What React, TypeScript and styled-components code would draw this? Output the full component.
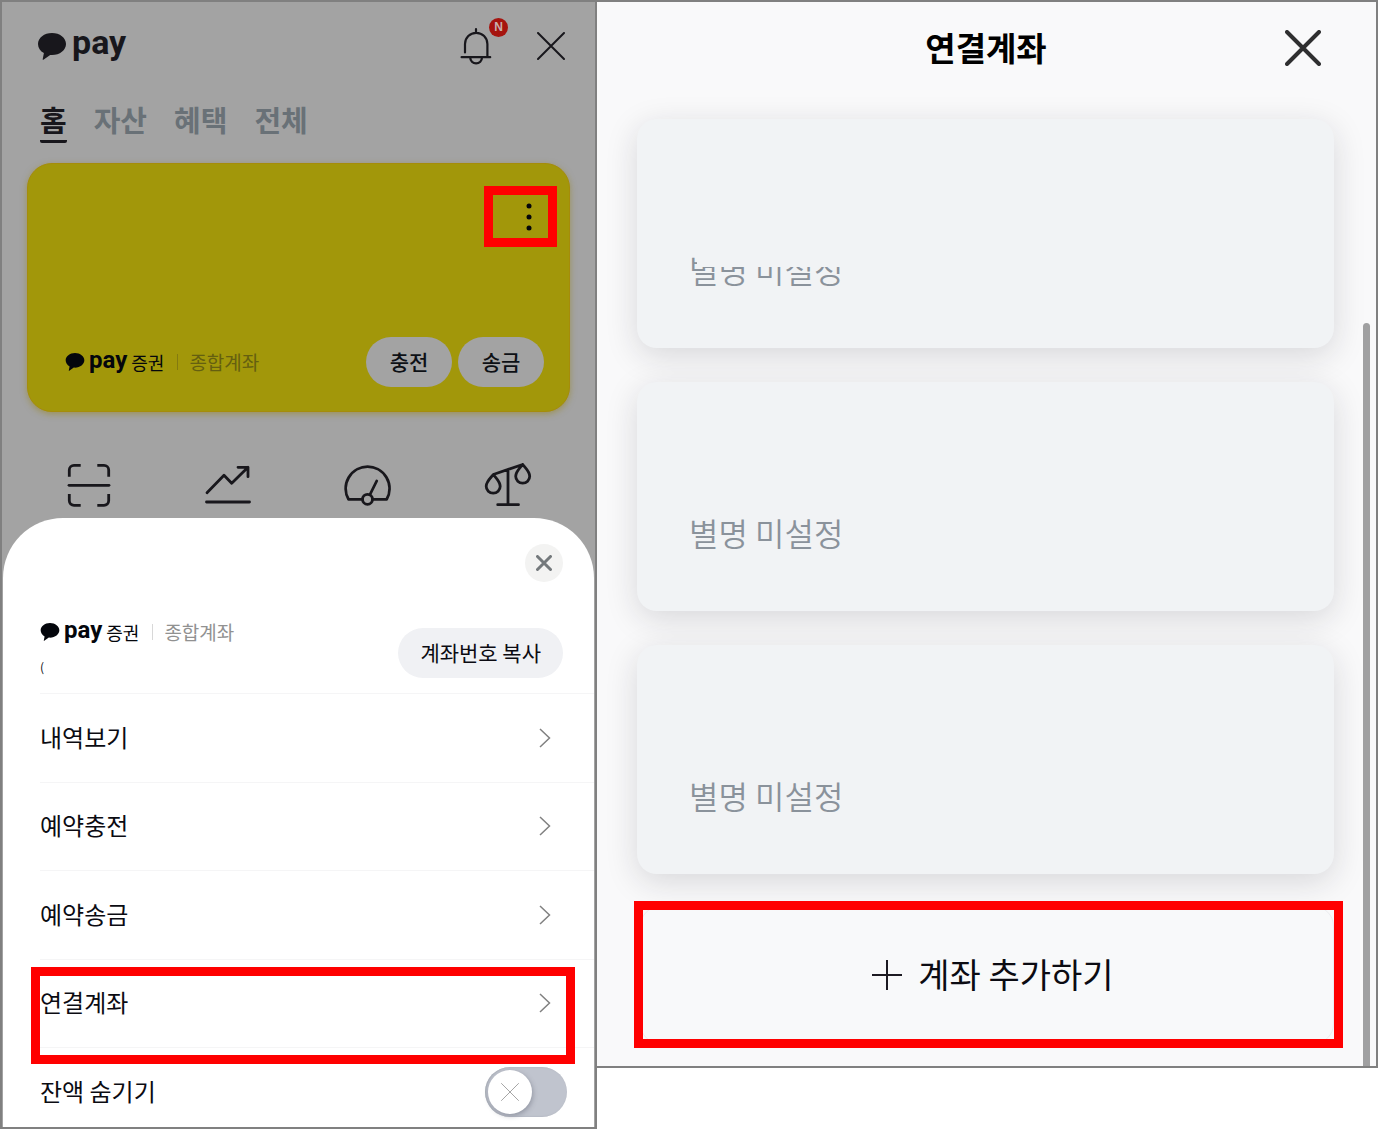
import React from 'react';
import styled, { createGlobalStyle, css } from 'styled-components';

const color = {
  frame: '#808080',
  dim: '#a3a3a3',
  dimInk: '#18171c',
  ink: '#0b0b12',
  red: '#ff0000',
  yellow: '#a2970a',
};

const GlobalStyle = createGlobalStyle`
  *, *::before, *::after { box-sizing: border-box; }
  body {
    margin: 0;
    background: #ffffff;
    font-family: "Noto Sans CJK KR", "Noto Sans", sans-serif;
    color: ${color.ink};
  }
  h1, p, ul { margin: 0; padding: 0; font-weight: inherit; }
  ul { list-style: none; }
  button {
    border: 0;
    padding: 0;
    background: none;
    font: inherit;
    color: inherit;
    cursor: pointer;
  }
  a { color: inherit; text-decoration: none; }
  svg { display: block; flex: none; }
`;

const Page = styled.main`
  display: grid;
  grid-template-columns: 597fr 781fr;
  align-items: start;
`;

/* Red marker frame laid over the control being explained */
const Marker = styled.span<{ $inset: string; $width?: number }>`
  position: absolute;
  inset: ${(p) => p.$inset};
  width: ${(p) => (p.$width ? `${p.$width}px` : 'auto')};
  border: 9px solid ${color.red};
  pointer-events: none;
`;

/* ---------- Home screen ---------- */

const HomeScreen = styled.section`
  border: 2px solid ${color.frame};
  background: ${color.dim};
  color: ${color.dimInk};
`;

const HomeHeader = styled.header`
  display: flex;
  align-items: center;
  justify-content: space-between;
  height: 88px;
  padding: 0 30px 0 36px;
`;

const HeaderActions = styled.div`
  display: flex;
  align-items: center;
  gap: 45px;
`;

const BellButton = styled.button`
  position: relative;
`;

const NewBadge = styled.span`
  position: absolute;
  top: -10px;
  right: -16px;
  width: 19px;
  height: 19px;
  border-radius: 50%;
  background: #a6140f;
  color: #c9b0ae;
  font: 700 12px/19px "Liberation Sans", sans-serif;
  text-align: center;
`;

const Brand = styled.span<{ $small?: boolean }>`
  display: flex;
  align-items: center;
  gap: ${(p) => (p.$small ? 4 : 6)}px;
`;

const BrandName = styled.span<{ $small?: boolean }>`
  font-family: Roboto, sans-serif;
  font-weight: 700;
  ${(p) =>
    p.$small
      ? css`
          font-size: 24px;
          line-height: 24px;
          padding-bottom: 4px;
        `
      : css`
          font-size: 34px;
          line-height: 34px;
          padding-bottom: 8px;
        `}
`;

const Tabs = styled.nav`
  display: flex;
  gap: 27px;
  margin-top: 12px;
  padding: 0 38px;
`;

const Tab = styled.a<{ $active?: boolean }>`
  height: 41px;
  border-bottom: 3px solid ${(p) => (p.$active ? color.dimInk : 'transparent')};
  border-radius: 2px;
  color: ${(p) => (p.$active ? color.dimInk : '#697177')};
  font-size: 29px;
  font-weight: 700;
  line-height: 34px;
`;

const BalanceCard = styled.article`
  position: relative;
  display: flex;
  flex-direction: column;
  justify-content: space-between;
  height: 249px;
  margin: 20px 25px 0 25px;
  padding: 31px 25px 24px 37px;
  border: 1px solid #a58c0a;
  border-radius: 25px;
  background: ${color.yellow};
  box-shadow: 0 2px 6px rgba(150, 130, 10, 0.5);
`;

const MoreButton = styled.button`
  align-self: flex-end;
  padding: 8px 12px;
`;

const CardFooter = styled.div`
  display: flex;
  align-items: center;
  justify-content: space-between;
`;

const AccountName = styled.div`
  display: flex;
  align-items: center;
  height: 26px;
  color: #04060c;
`;

const Company = styled.span`
  margin-left: 4px;
  font-size: 18px;
  font-weight: 400;
  line-height: 26px;
`;

const AccountType = styled.span<{ $dim?: boolean }>`
  display: flex;
  align-items: center;
  gap: 11px;
  margin-left: 13px;
  color: ${(p) => (p.$dim ? '#655f10' : '#919191')};
  font-size: 19px;
  font-weight: 400;
  line-height: 26px;

  &::before {
    content: '';
    width: 1px;
    height: 16px;
    background: ${(p) => (p.$dim ? '#837a10' : '#d8d8d8')};
  }
`;

const CardButtons = styled.div`
  display: flex;
  gap: 6px;
`;

const CardButton = styled.button`
  width: 86px;
  height: 50px;
  padding-bottom: 2px;
  border-radius: 25px;
  background: ${color.dim};
  color: #0d1015;
  font-size: 21px;
  font-weight: 500;
  line-height: 30px;
`;

const Shortcuts = styled.div`
  display: grid;
  grid-template-columns: repeat(4, 1fr);
  justify-items: center;
  margin-top: 45px;
  padding: 0 17px 5px 16px;
`;

/* ---------- Bottom sheet ---------- */

const Sheet = styled.section`
  margin: 0 1px;
  border-radius: 60px 60px 0 0;
  background: #ffffff;
  color: ${color.ink};
`;

const SheetTop = styled.div`
  display: flex;
  justify-content: flex-end;
  padding: 26px 31px 0;
`;

const RoundClose = styled.button`
  display: grid;
  place-items: center;
  width: 38px;
  height: 38px;
  border-radius: 50%;
  background: #f3f3f2;
`;

const AccountRow = styled.div`
  display: flex;
  align-items: flex-end;
  justify-content: space-between;
  margin-top: 37px;
  padding: 0 31px 15px 37px;
`;

const AccountInfo = styled.div`
  display: grid;
  gap: 11px;
`;

/* The number itself is hidden; only its leading stroke shows */
const AccountNumber = styled.p`
  font-size: 12px;
  line-height: 22px;
`;

const CopyButton = styled.button`
  height: 50px;
  padding: 0 22px 2px;
  border-radius: 25px;
  background: #f0f1f4;
  font-size: 21px;
  line-height: 30px;
`;

const Menu = styled.ul`
  position: relative;
  display: grid;
  grid-auto-rows: 1fr;
  height: 354px;
  padding-left: 37px;
`;

const MenuItem = styled.li`
  border-top: 1px solid #f5f5f6;
`;

const MenuLink = styled.a`
  display: flex;
  align-items: center;
  justify-content: space-between;
  height: 100%;
  padding-right: 43px;
`;

const MenuText = styled.span`
  padding-bottom: 2px;
  font-size: 24px;
  line-height: 34px;
`;

const HideRow = styled.label`
  display: flex;
  align-items: center;
  justify-content: space-between;
  height: 80px;
  margin-left: 37px;
  padding: 9px 27px 0 0;
  border-top: 1px solid #f5f5f6;
`;

const SwitchBox = styled.span`
  position: relative;
  height: 50px;

  svg {
    position: absolute;
    top: 16px;
    left: 16px;
    pointer-events: none;
  }
`;

const Switch = styled.input`
  appearance: none;
  display: block;
  width: 82px;
  height: 50px;
  margin: 0;
  padding: 3px;
  border-radius: 25px;
  background: #c0c4ce;
  box-shadow: inset 1px 0 2px #a4a9b2;

  &::before {
    content: '';
    display: block;
    width: 44px;
    height: 44px;
    border-radius: 50%;
    background: #ffffff;
    box-shadow: 1px 2px 5px rgba(90, 95, 110, 0.45);
  }
`;

/* ---------- Linked accounts screen ---------- */

const LinkedScreen = styled.section`
  position: relative;
  height: 1068px;
  overflow: hidden;
  border: solid ${color.frame};
  border-width: 2px 2px 2px 0;
  background: #f9f9fa;
`;

const LinkedHeader = styled.header`
  display: grid;
  grid-template-columns: 1fr auto 1fr;
  align-items: center;
  height: 92px;
  padding: 0 55px 0 54px;

  h1 {
    grid-column: 2;
    padding-bottom: 3px;
    color: #000000;
    font-size: 33px;
    font-weight: 700;
    line-height: 44px;
  }
  button {
    justify-self: end;
  }
`;

const AccountList = styled.ul`
  display: grid;
  gap: 34px;
  padding: 25px 42px 0 40px;
`;

const AccountCard = styled.li<{ $masked?: boolean }>`
  position: relative;
  height: 229px;
  padding: 128px 52px 0;
  border-radius: 20px;
  background: #f1f3f5;
  box-shadow: 0 8px 32px rgba(30, 30, 40, 0.15);
  color: #8a929b;
  font-size: 32px;
  font-weight: 350;
  line-height: 44px;

  ${(p) =>
    p.$masked &&
    css`
      &::after {
        content: '';
        position: absolute;
        top: 130px;
        left: 60px;
        width: 160px;
        height: 18px;
        background: #f1f3f5;
      }
    `}
`;

const AddArea = styled.div`
  position: relative;
  margin: 32px 42px 0 43px;
`;

const AddButton = styled.button`
  display: flex;
  align-items: center;
  justify-content: center;
  gap: 16px;
  width: 100%;
  height: 138px;
  padding-left: 12px;
  border: 1px solid #ebedf0;
  border-radius: 20px;
  background: #f8f9fa;
`;

const AddText = styled.span`
  padding-bottom: 3px;
  font-size: 34px;
  font-weight: 400;
  line-height: 44px;
`;

const ScrollThumb = styled.span`
  position: absolute;
  top: 321px;
  right: 6px;
  bottom: 0;
  width: 7px;
  border-radius: 4px 4px 0 0;
  background: #a0a0a1;
`;

/* ---------- Icons ---------- */

const Bubble = ({ width, height }: { width: number; height: number }) => (
  <svg width={width} height={height} viewBox="0 0 28 27" fill="currentColor">
    <path d="M14 0C6.2 0 0 4.900 0 11c0 3.900 2.300 7.100 5.900 9.100L4.700 26.300c-.1.500.3.700.7.400l6.800-4.800c.6.100 1.200.1 1.800.1 7.800 0 14-4.900 14-11S21.800 0 14 0z" />
  </svg>
);

const Cross = ({ size, stroke, tone }: { size: number; stroke: number; tone: string }) => {
  const a = stroke / 2;
  const b = size - a;
  return (
    <svg width={size} height={size} stroke={tone} strokeWidth={stroke} strokeLinecap="round">
      <path d={`M${a} ${a}L${b} ${b}M${b} ${a}L${a} ${b}`} />
    </svg>
  );
};

const BellIcon = () => (
  <svg width="32" height="37" fill="none" stroke="currentColor" strokeWidth="2.200" strokeLinecap="round" strokeLinejoin="round">
    <path d="M16 1.200V5M5 24.500V16a11.200 11.200 0 0 1 22.400 0V29M1.600 29.200H30.200M10.200 29.500a5.900 5.900 0 0 0 11.800 0" />
  </svg>
);

const MoreIcon = () => (
  <svg width="6" height="28" fill="#04060c">
    <circle cx="3" cy="3" r="2.500" />
    <circle cx="3" cy="14" r="2.500" />
    <circle cx="3" cy="25" r="2.500" />
  </svg>
);

const shortcutIcons: { name: string; drawing: React.ReactNode }[] = [
  {
    name: '스캔',
    drawing: (
      <>
        <path
          strokeLinecap="butt"
          d="M20.700 8.300H14a4.700 4.700 0 0 0-4.700 4.700v6.700M37.300 8.300H44a4.700 4.700 0 0 1 4.700 4.700v6.700M9.300 37v6.600a4.700 4.700 0 0 0 4.700 4.700h6.700M48.700 37v6.600a4.700 4.700 0 0 1-4.700 4.700h-6.700"
        />
        <path d="M9 28.300H49" />
      </>
    ),
  },
  {
    name: '투자',
    drawing: <path d="M7 35.700L24 18.300L31.700 26.300L48 10.300M38 10.300H48V19.700M6.500 45H49.500" />,
  },
  {
    name: '신용관리',
    drawing: (
      <>
        <path d="M22.300 42.300H8.500a21.900 21.900 0 1 1 38.200 0H32.700M30 37.500L36.700 24" />
        <circle cx="27.500" cy="42.300" r="5" />
      </>
    ),
  },
  {
    name: '대출비교',
    drawing: (
      <path d="M13.300 17.500L42.700 7.500M28 12.500V47.700M17.700 47.700H38.500M13.300 17.500C11 20.500 6.200 24.500 6.200 29.200a7 7 0 0 0 14 0C20.200 24.500 15.600 20.500 13.300 17.500ZM42.700 7.500C40.400 10.500 35.700 14.500 35.700 19.200a7 7 0 0 0 14 0C49.700 14.500 45 10.500 42.700 7.500Z" />
    ),
  },
];

const Chevron = () => (
  <svg width="12" height="20" fill="none" stroke="#808080" strokeWidth="1.500">
    <path d="M1 1L10.500 10L1 19" />
  </svg>
);

const PlusIcon = () => (
  <svg width="30" height="30" stroke="#1c1a22" strokeWidth="2">
    <path d="M15 0V30M0 15H30" />
  </svg>
);

/* ---------- Screens ---------- */

const AccountTitle = ({ dim }: { dim?: boolean }) => (
  <AccountName>
    <Brand $small>
      <Bubble width={20} height={18} />
      <BrandName $small>pay</BrandName>
    </Brand>
    <Company>증권</Company>
    <AccountType $dim={dim}>종합계좌</AccountType>
  </AccountName>
);

const tabs = ['홈', '자산', '혜택', '전체'];
const menu = ['내역보기', '예약충전', '예약송금', '연결계좌'];

export default function App() {
  return (
    <>
      <GlobalStyle />
      <Page>
        <HomeScreen>
          <HomeHeader>
            <Brand>
              <Bubble width={28} height={27} />
              <BrandName>pay</BrandName>
            </Brand>
            <HeaderActions>
              <BellButton aria-label="알림">
                <BellIcon />
                <NewBadge>N</NewBadge>
              </BellButton>
              <button aria-label="닫기">
                <Cross size={28} stroke={2} tone={color.dimInk} />
              </button>
            </HeaderActions>
          </HomeHeader>

          <Tabs>
            {tabs.map((name, i) => (
              <Tab key={name} href="#" $active={i === 0}>
                {name}
              </Tab>
            ))}
          </Tabs>

          <BalanceCard>
            <MoreButton aria-label="더보기">
              <MoreIcon />
            </MoreButton>
            <Marker $inset="22px 12px 164px auto" $width={73} />
            <CardFooter>
              <AccountTitle dim />
              <CardButtons>
                <CardButton>충전</CardButton>
                <CardButton>송금</CardButton>
              </CardButtons>
            </CardFooter>
          </BalanceCard>

          <Shortcuts>
            {shortcutIcons.map(({ name, drawing }) => (
              <button key={name} aria-label={name}>
                <svg
                  width="56"
                  height="56"
                  fill="none"
                  stroke="currentColor"
                  strokeWidth="2.800"
                  strokeLinecap="round"
                  strokeLinejoin="round"
                >
                  {drawing}
                </svg>
              </button>
            ))}
          </Shortcuts>

          <Sheet>
            <SheetTop>
              <RoundClose aria-label="닫기">
                <Cross size={16} stroke={3} tone="#74797c" />
              </RoundClose>
            </SheetTop>
            <AccountRow>
              <AccountInfo>
                <AccountTitle />
                <AccountNumber>(</AccountNumber>
              </AccountInfo>
              <CopyButton>계좌번호 복사</CopyButton>
            </AccountRow>
            <Menu>
              {menu.map((name) => (
                <MenuItem key={name}>
                  <MenuLink href="#">
                    <MenuText>{name}</MenuText>
                    <Chevron />
                  </MenuLink>
                </MenuItem>
              ))}
              <Marker as="li" $inset="274px 19px -17px 28px" aria-hidden="true" />
            </Menu>
            <HideRow>
              <MenuText>잔액 숨기기</MenuText>
              <SwitchBox>
                <Switch type="checkbox" role="switch" />
                <Cross size={18} stroke={1} tone="#a6a6a6" />
              </SwitchBox>
            </HideRow>
          </Sheet>
        </HomeScreen>

        <LinkedScreen>
          <LinkedHeader>
            <h1>연결계좌</h1>
            <button aria-label="닫기">
              <Cross size={36} stroke={4} tone="#2f2f30" />
            </button>
          </LinkedHeader>
          <AccountList>
            <AccountCard $masked>별명 미설정</AccountCard>
            <AccountCard>별명 미설정</AccountCard>
            <AccountCard>별명 미설정</AccountCard>
          </AccountList>
          <AddArea>
            <AddButton>
              <PlusIcon />
              <AddText>계좌 추가하기</AddText>
            </AddButton>
            <Marker $inset="-5px -9px -4px -6px" />
          </AddArea>
          <ScrollThumb />
        </LinkedScreen>
      </Page>
    </>
  );
}
